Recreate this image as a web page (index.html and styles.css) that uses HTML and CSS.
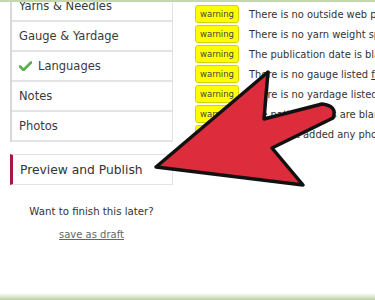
FILE: index.html
```html
<!DOCTYPE html>
<html>
<head>
<meta charset="utf-8">
<link rel="stylesheet" href="styles.css">
</head>
<body>
<div class="topbar"></div>
<div class="page">
  <aside class="side">
    <ul class="menu">
      <li class="item">Yarns &amp; Needles</li>
      <li class="item">Gauge &amp; Yardage</li>
      <li class="item"><svg class="check" width="13" height="10" viewBox="0 0 13 10"><path d="M1 5.5 L4.5 9 L12 1.5" fill="none" stroke="#5bb04e" stroke-width="2.6" stroke-linecap="round" stroke-linejoin="round"/></svg>Languages</li>
      <li class="item">Notes</li>
      <li class="item">Photos</li>
    </ul>
    <div class="publish">Preview and Publish</div>
    <p class="later">Want to finish this later?</p>
    <a class="draft" href="#">save as draft</a>
  </aside>
  <main class="warnings">
    <div class="row"><span class="badge">warning</span><span class="msg">There is no outside web page</span></div>
    <div class="row"><span class="badge">warning</span><span class="msg">There is no yarn weight specified</span></div>
    <div class="row"><span class="badge">warning</span><span class="msg">The publication date is blank</span></div>
    <div class="row"><span class="badge">warning</span><span class="msg">There is no gauge listed <a href="#">for this</a></span></div>
    <div class="row"><span class="badge">warning</span><span class="msg">There is no yardage listed</span></div>
    <div class="row"><span class="badge">warning</span><span class="msg">The pattern fields are blank</span></div>
    <div class="row"><span class="badge">warning</span><span class="msg">You've not added any photos</span></div>
  </main>
</div>
<div class="bottombar"></div>
<svg class="arrow" width="375" height="300" viewBox="0 0 375 300">
  <path d="M156 167 L268 72 L264 119 L322 104 Q338 106 333 118 L272 148 L303 185 Z" fill="#dd2c3c" stroke="#111" stroke-width="3.5" stroke-linejoin="round"/>
</svg>
</body>
</html>
```
FILE: styles.css
```css
html, body {
  margin: 0;
  padding: 0;
}
body {
  width: 375px;
  height: 300px;
  overflow: hidden;
  background: #fff;
  font-family: "DejaVu Sans", Verdana, sans-serif;
  color: #333;
  position: relative;
}
.topbar {
  position: relative;
  z-index: 2;
  height: 2px;
  background: #c3d7b0;
}
.page {
  display: flex;
  align-items: flex-start;
}
.side {
  flex: 0 0 163px;
  width: 163px;
  margin-left: 10px;
  margin-top: -10px;
  display: flex;
  flex-direction: column;
  align-items: center;
}
.menu {
  list-style: none;
  margin: 0;
  padding: 0;
  width: 100%;
  box-sizing: border-box;
  border-left: 2px solid #d9d9d9;
  border-right: 1px solid #e3e3e3;
}
.item {
  height: 28px;
  border-bottom: 2px solid #e4e4e4;
  display: flex;
  align-items: center;
  padding-left: 7px;
  font-size: 11.5px;
  color: #3a3a3a;
}
.check {
  margin-right: 6px;
}
.publish {
  margin-top: 12px;
  width: 100%;
  box-sizing: border-box;
  height: 31px;
  border: 1px solid #e2e2e2;
  border-left: 3px solid #a81a44;
  display: flex;
  align-items: center;
  padding-left: 7px;
  font-size: 12.3px;
  color: #333;
  white-space: nowrap;
}
.later {
  margin: 21px 0 0;
  font-size: 10.2px;
  color: #333;
  white-space: nowrap;
}
.draft {
  margin-top: 12px;
  font-size: 10px;
  color: #666;
  text-decoration: underline;
}
.warnings {
  flex: 1 1 auto;
  min-width: 0;
  overflow: hidden;
  margin-left: 22px;
  margin-top: 2px;
  display: flex;
  flex-direction: column;
  white-space: nowrap;
}
.row {
  height: 20px;
  display: flex;
  align-items: center;
}
.badge {
  flex: 0 0 44px;
  width: 44px;
  height: 18px;
  box-sizing: border-box;
  border: 1px solid #d2d200;
  border-radius: 3px;
  background: #ffff00;
  font-size: 8.5px;
  color: #444;
  display: flex;
  align-items: center;
  justify-content: center;
  margin-right: 10px;
}
.msg {
  font-family: "DejaVu Sans Condensed", "DejaVu Sans", sans-serif;
  font-size: 11px;
  color: #333;
}
.msg a {
  color: #333;
  text-decoration: underline;
}
.bottombar {
  position: absolute;
  left: 0;
  right: 0;
  bottom: 0;
  height: 7px;
  background: linear-gradient(#ffffff, #d7e6c8 60%, #b8cca4);
}
.arrow {
  position: absolute;
  left: 0;
  top: 0;
}
```
